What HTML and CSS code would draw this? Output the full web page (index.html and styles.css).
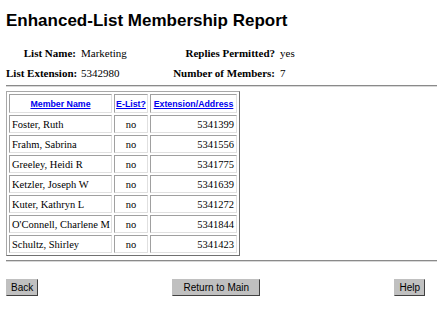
FILE: index.html
```html
<!DOCTYPE html>
<html>
	<head>
		<meta charset="UTF-8">
		<title>Enhanced-List Membership Report</title>
		<link rel="stylesheet" href="styles.css">
	</head>
	<body>
		<h1 class="biaoti">Enhanced-List Membership Report</h1>

		<div class="xinxi">
			<span class="ming">List Name:</span>
			<span class="zhi">Marketing</span>
			<span class="ming">Replies Permitted?</span>
			<span class="zhi">yes</span>
			<span class="ming">List Extension:</span>
			<span class="zhi">5342980</span>
			<span class="ming">Number of Members:</span>
			<span class="zhi">7</span>
		</div>

		<hr class="xian">

		<table class="chengyuan">
			<tr>
				<th class="c1"><a href="#">Member Name</a></th>
				<th class="c2"><a href="#">E-List?</a></th>
				<th class="c3"><a href="#">Extension/Address</a></th>
			</tr>
			<tr><td>Foster, Ruth</td><td class="zhong">no</td><td class="you">5341399</td></tr>
			<tr><td>Frahm, Sabrina</td><td class="zhong">no</td><td class="you">5341556</td></tr>
			<tr><td>Greeley, Heidi R</td><td class="zhong">no</td><td class="you">5341775</td></tr>
			<tr><td>Ketzler, Joseph W</td><td class="zhong">no</td><td class="you">5341639</td></tr>
			<tr><td>Kuter, Kathryn L</td><td class="zhong">no</td><td class="you">5341272</td></tr>
			<tr><td>O'Connell, Charlene M</td><td class="zhong">no</td><td class="you">5341844</td></tr>
			<tr><td>Schultz, Shirley</td><td class="zhong">no</td><td class="you">5341423</td></tr>
		</table>

		<hr class="xian xia">

		<div class="anniu">
			<button class="btn">Back</button>
			<button class="btn kuan">Return to Main</button>
			<button class="btn">Help</button>
		</div>
	</body>
</html>
```

FILE: styles.css
```css
body {
	margin: 0;
	padding: 0 6px;
	background: #fff;
	color: #000;
	font-family: "Liberation Serif", "Times New Roman", serif;
	font-size: 11px;
}

.biaoti {
	font-family: "Liberation Sans", Arial, sans-serif;
	font-size: 17px;
	font-weight: bold;
	margin: 0;
	padding-top: 9px;
	line-height: 24px;
}

.xinxi {
	display: grid;
	grid-template-columns: 70px 80px 109px auto;
	column-gap: 5px;
	padding-top: 10px;
	white-space: nowrap;
}

.xinxi span {
	line-height: 20px;
}

.ming {
	font-weight: bold;
	text-align: right;
}

.xian {
	border: 0;
	border-top: 1px solid #8a8a8a;
	border-bottom: 1px solid #d8d8d8;
	height: 0;
	margin: 2px 0 4px 0;
}

.xian.xia {
	margin: 4px 0 0 0;
}

/* 成员表格 */
.chengyuan {
	table-layout: fixed;
	width: 232px;
	border: 1px solid #a8a8a8;
	border-right-color: #707070;
	border-bottom-color: #707070;
	border-spacing: 2px;
	font-size: 10.5px;
}

.chengyuan th,
.chengyuan td {
	border: 1px solid #a0a0a0;
	border-right-color: #e0e0e0;
	border-bottom-color: #e0e0e0;
	padding: 0 2px;
	height: 16px;
	white-space: nowrap;
	overflow: hidden;
}

.chengyuan th {
	font-family: "Liberation Sans", Arial, sans-serif;
	font-size: 8.8px;
	font-weight: bold;
	height: 17px;
	padding: 0 1px;
}

.chengyuan th a {
	color: #0000ee;
	text-decoration: underline;
}

.c1 {
	width: 99px;
}

.c2 {
	width: 30px;
}

.c3 {
	width: 83px;
}

.zhong {
	text-align: center;
}

.you {
	text-align: right;
}

/* 按钮 */
.anniu {
	display: flex;
	justify-content: space-between;
	align-items: center;
	padding: 17px 12px 0 0;
}

.btn {
	font-family: "Liberation Sans", Arial, sans-serif;
	font-size: 10px;
	color: #000;
	background: #c0c0c0;
	border: 1px solid #c0c0c0;
	border-right-color: #404040;
	border-bottom-color: #404040;
	border-radius: 0;
	height: 17px;
	padding: 0 4px;
	margin: 0;
}

.kuan {
	width: 88px;
}
```
